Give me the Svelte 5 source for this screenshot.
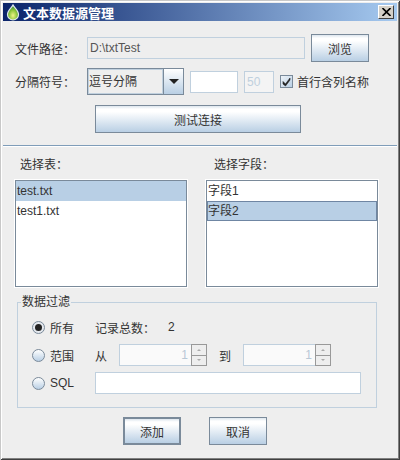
<script lang="ts">
  const tables = ['test.txt', 'test1.txt'];
  const fields = ['字段1', '字段2'];
</script>

<div class="window">
  <header class="titlebar">
    <svg class="logo" width="14" height="17" viewBox="0 0 14 17">
      <defs>
        <radialGradient id="drop" cx="0.5" cy="0.7" r="0.6">
          <stop offset="0" stop-color="#eef58a" />
          <stop offset="0.6" stop-color="#8cc63a" />
          <stop offset="1" stop-color="#3f8f3a" />
        </radialGradient>
      </defs>
      <path d="M7 1 C8 3.5 12.5 6.5 12.5 10.5 A5.5 5.5 0 0 1 1.5 10.5 C1.5 6.5 6 3.5 7 1 Z" fill="url(#drop)" stroke="#dfe8ea" stroke-width="1.2" />
    </svg>
    <span class="title">文本数据源管理</span>
    <button class="close" type="button">
      <svg width="9" height="8" viewBox="0 0 9 8"><path d="M0.5 0 L8.5 8 M8.5 0 L0.5 8" stroke="#000" stroke-width="1.6" /></svg>
    </button>
  </header>

  <div class="row path-row">
    <span class="label">文件路径：</span>
    <div class="field path">D:\txtTest</div>
    <button class="btn browse" type="button">浏览</button>
  </div>

  <div class="row sep-row">
    <span class="label">分隔符号：</span>
    <div class="combo">
      <span class="combo-value">逗号分隔</span>
      <span class="combo-arrow"><i></i></span>
    </div>
    <div class="field white sep-custom"></div>
    <div class="field count">50</div>
    <span class="check">
      <svg width="11" height="11" viewBox="0 0 11 11"><path d="M2 5.5 L4.5 8 L9 2 L9 4 L4.5 10 L2 8 Z" fill="#222" stroke="#222" stroke-width="0.6" /></svg>
    </span>
    <span class="check-label">首行含列名称</span>
  </div>

  <button class="btn test" type="button">测试连接</button>

  <div class="divider"></div>

  <div class="lists">
    <section>
      <div class="list-title tables-title">选择表：</div>
      <ul class="list">
        {#each tables as t, i}
          <li class:selected={i === 0}>{t}</li>
        {/each}
      </ul>
    </section>
    <section>
      <div class="list-title fields-title">选择字段：</div>
      <ul class="list">
        {#each fields as f, i}
          <li class:selected={i === 1} class:focused={i === 1}>{f}</li>
        {/each}
      </ul>
    </section>
  </div>

  <fieldset class="filter">
    <legend>数据过滤</legend>
    <div class="filter-row">
      <span class="radio on"><i></i></span>
      <span class="radio-label">所有</span>
      <span class="total">记录总数：</span>
      <span class="total-value">2</span>
    </div>
    <div class="filter-row">
      <span class="radio"></span>
      <span class="radio-label">范围</span>
      <span class="from">从</span>
      <div class="spinner">
        <div class="spin-input">1</div>
        <div class="spin-btns"><span class="up"><i></i></span><span class="down"><i></i></span></div>
      </div>
      <span class="to">到</span>
      <div class="spinner">
        <div class="spin-input">1</div>
        <div class="spin-btns"><span class="up"><i></i></span><span class="down"><i></i></span></div>
      </div>
    </div>
    <div class="filter-row">
      <span class="radio"></span>
      <span class="radio-label sql">SQL</span>
      <div class="field white sql-input"></div>
    </div>
  </fieldset>

  <div class="actions">
    <button class="btn default" type="button">添加</button>
    <button class="btn" type="button">取消</button>
  </div>
</div>

<style>
  :global(body) {
    margin: 0;
  }

  .window {
    width: 400px;
    height: 460px;
    box-sizing: border-box;
    padding: 3px;
    background: #eeeeee;
    color: #333333;
    font-family: "Liberation Sans", "Noto Sans CJK SC", sans-serif;
    font-size: 12px;
    overflow: hidden;
    box-shadow:
      inset 1px 1px 0 #c8c8c8,
      inset -1px -1px 0 #404040,
      inset 2px 2px 0 #ffffff,
      inset -2px -2px 0 #808080;
  }

  .titlebar {
    height: 18px;
    display: flex;
    align-items: center;
    background: linear-gradient(to right, #0a246a, #a6caf0);
    padding: 0 3px 0 3px;
  }

  .logo {
    flex: none;
  }

  .title {
    margin-left: 3px;
    color: #ffffff;
    font-size: 13px;
    font-weight: bold;
    font-family: "Noto Sans CJK SC", sans-serif;
  }

  .close {
    margin-left: auto;
    width: 16px;
    height: 14px;
    padding: 0;
    display: flex;
    align-items: center;
    justify-content: center;
    background: #d4d0c8;
    border: 1px solid;
    border-color: #ffffff #404040 #404040 #ffffff;
  }

  .row {
    display: flex;
    align-items: center;
    padding-left: 12px;
  }

  .path-row {
    margin-top: 13px;
    height: 28px;
  }

  .sep-row {
    margin-top: 6px;
    height: 27px;
  }

  .label {
    width: 72px;
    flex: none;
  }

  .field {
    box-sizing: border-box;
    height: 22px;
    line-height: 20px;
    padding: 0 2px;
    border: 1px solid #c0d0de;
    background: #eeeeee;
    color: #555555;
    flex: none;
  }

  .white {
    background: #ffffff;
  }

  .path {
    width: 218px;
  }

  .browse {
    margin-left: 6px;
  }

  .btn {
    box-sizing: border-box;
    width: 58px;
    height: 28px;
    padding: 0;
    border: 1px solid #7a8a9a;
    background: linear-gradient(to bottom, #dde6ee 0, #ffffff 12%, #ffffff 22%, #b9cfe4 100%);
    color: #333333;
    font: inherit;
    font-size: 12px;
    flex: none;
  }

  .combo {
    box-sizing: border-box;
    width: 97px;
    height: 27px;
    display: flex;
    border: 1px solid #7a8a9a;
    flex: none;
  }

  .combo-value {
    flex: 1;
    border-right: 1px solid #7a8a9a;
    padding: 2px 0 0 1px;
    line-height: 23px;
    background: #eeeeee;
    box-shadow: inset 0 0 0 1px #c0d0de;
    font-size: 12px;
  }

  .combo-arrow {
    width: 19px;
    display: flex;
    align-items: center;
    justify-content: center;
    background: linear-gradient(to bottom, #ffffff, #b9cfe4);
  }

  .combo-arrow i {
    width: 0;
    height: 0;
    border-left: 5px solid transparent;
    border-right: 5px solid transparent;
    border-top: 5px solid #222222;
  }

  .sep-custom {
    margin-left: 6px;
    width: 48px;
  }

  .count {
    margin-left: 6px;
    width: 30px;
    color: #c0d0de;
    font-size: 12px;
    background: #f4f4f4;
  }

  .check {
    box-sizing: border-box;
    margin-left: 6px;
    width: 13px;
    height: 13px;
    display: flex;
    align-items: center;
    justify-content: center;
    border: 1px solid #7a8a9a;
    background: linear-gradient(135deg, #eef3f8, #b9cfe4);
    flex: none;
  }

  .check-label {
    margin-left: 4px;
    white-space: nowrap;
  }

  .test {
    display: block;
    margin: 10px 0 0 92px;
    width: 206px;
  }

  .divider {
    margin-top: 12px;
    height: 1px;
    background: #7f9db9;
    box-shadow: 0 1px 0 #ffffff;
  }

  .lists {
    margin: 11px 0 0 12px;
    display: grid;
    grid-template-columns: 172px 172px;
    column-gap: 19px;
  }

  .list-title {
    height: 23px;
    line-height: 16px;
  }

  .tables-title {
    padding-left: 5px;
  }

  .fields-title {
    padding-left: 8px;
  }

  .list {
    box-sizing: border-box;
    list-style: none;
    margin: 0;
    padding: 0;
    height: 107px;
    background: #ffffff;
    border: 1px solid #7a8a9a;
    outline: 1px solid #ffffff;
  }

  .list li {
    box-sizing: border-box;
    height: 20px;
    line-height: 20px;
    padding-left: 1px;
    font-size: 12px;
  }

  .list li.selected {
    background: #b8cfe5;
  }

  .list li.focused {
    border: 1px solid #6f86a3;
    line-height: 18px;
    padding-left: 0;
  }

  .filter {
    box-sizing: border-box;
    margin: 8px 0 0 14px;
    padding: 0;
    width: 360px;
    height: 113px;
    border: 1px solid #c0d0de;
    display: block;
  }

  .filter legend {
    margin-left: 3px;
    padding: 0 1px;
    line-height: 14px;
    font-size: 12px;
  }

  .filter-row {
    height: 22px;
    display: flex;
    align-items: center;
    padding-left: 14px;
    margin-top: 6px;
  }

  .filter-row:first-of-type {
    margin-top: 7px;
  }

  .radio {
    box-sizing: border-box;
    width: 13px;
    height: 13px;
    border-radius: 50%;
    border: 1px solid #7a8a9a;
    background: linear-gradient(to bottom, #ffffff, #b9cfe4);
    display: flex;
    align-items: center;
    justify-content: center;
    flex: none;
  }

  .radio.on {
    background: #e4e8ee;
  }

  .radio i {
    width: 7px;
    height: 7px;
    border-radius: 50%;
    background: #222222;
  }

  .radio-label {
    margin-left: 5px;
    width: 45px;
    flex: none;
  }

  .total {
    width: 73px;
  }

  .from {
    width: 24px;
  }

  .to {
    width: 24px;
    margin-left: 12px;
  }

  .spinner {
    display: flex;
    height: 22px;
  }

  .spin-input {
    box-sizing: border-box;
    width: 72px;
    height: 22px;
    padding-right: 3px;
    border: 1px solid #c0d0de;
    border-right: none;
    background: #fafafa;
    color: #b8c8d6;
    text-align: right;
    line-height: 20px;
  }

  .spin-btns {
    box-sizing: border-box;
    width: 16px;
    height: 22px;
    display: flex;
    flex-direction: column;
    border: 1px solid #999999;
    background: #eeeeee;
  }

  .spin-btns span {
    flex: 1;
    display: flex;
    align-items: center;
    justify-content: center;
  }

  .spin-btns .up {
    border-bottom: 1px solid #999999;
  }

  .spin-btns i {
    width: 0;
    height: 0;
    border-left: 2px solid transparent;
    border-right: 2px solid transparent;
  }

  .up i {
    border-bottom: 2px solid #aaaaaa;
  }

  .down i {
    border-top: 2px solid #aaaaaa;
  }

  .sql-input {
    width: 266px;
  }

  .actions {
    margin: 9px 0 0 120px;
    display: flex;
    gap: 28px;
  }

  .default {
    border: 2px solid #7a8a9a;
  }
</style>
